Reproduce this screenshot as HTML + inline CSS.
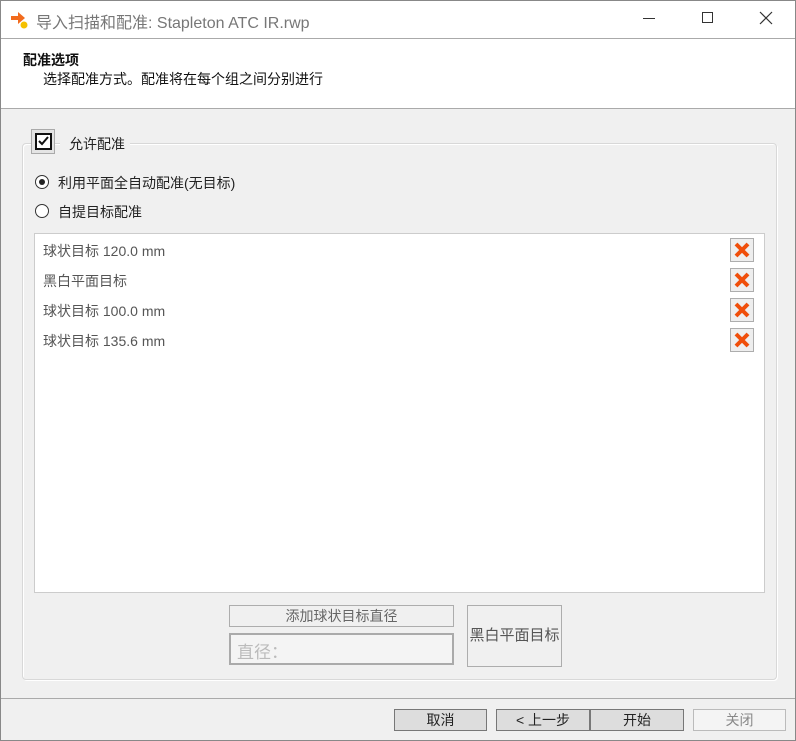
<!DOCTYPE html><html><head><meta charset="utf-8"><style>
*{box-sizing:border-box;margin:0;padding:0}
body{width:796px;height:741px;background:#f0f0f0;font-family:"Liberation Sans","Noto Sans CJK SC",sans-serif;font-size:14px;color:#222;position:relative;overflow:hidden}
.a{position:absolute}
.btn{position:absolute;border:1px solid #adadad;background:#e1e1e1;text-align:center;font-size:14px;line-height:20px}
.x{position:absolute;left:730px;width:24px;height:24px;border:1px solid #adadad;background:#eee}
</style></head><body>
<div class="a" style="left:0;top:0;width:796px;height:741px;border:1px solid #888"></div>
<div class="a" style="left:1px;top:1px;width:794px;height:37px;background:#fff"></div>
<svg class="a" style="left:10px;top:10px" width="20" height="20"><path d="M1 6h7V2l7 6-7 6v-4H1z" fill="#f26b1d"/><circle cx="14" cy="15" r="3.5" fill="#f5c000"/></svg>
<div class="a" style="left:36px;top:9px;font-size:16px;color:#777">导入扫描和配准: Stapleton ATC IR.rwp</div>
<div class="a" style="left:643px;top:18px;width:12px;height:1px;background:#333"></div>
<div class="a" style="left:702px;top:12px;width:11px;height:11px;border:1px solid #333"></div>
<svg class="a" style="left:759px;top:11px" width="14" height="14"><path d="M1 1L13 13M13 1L1 13" stroke="#333" stroke-width="1.2"/></svg>
<div class="a" style="left:1px;top:38px;width:794px;height:71px;background:#fff;border-top:1px solid #aaa;border-bottom:1px solid #aaa"></div>
<div class="a" style="left:23px;top:50px;font-weight:bold;font-size:14px;color:#111">配准选项</div>
<div class="a" style="left:43px;top:69px;color:#111">选择配准方式。配准将在每个组之间分别进行</div>
<div class="a" style="left:22px;top:143px;width:755px;height:537px;border:1px solid #d8d8d8;border-radius:4px;box-shadow:inset 1px 1px 0 #fff,1px 1px 0 #fff"></div>
<div class="a" style="left:60px;top:132px;width:70px;height:20px;background:#f0f0f0"></div>
<div class="a" style="left:31px;top:129px;width:24px;height:25px;border:1px solid #aaa;background:#e4e4e4"></div>
<div class="a" style="left:35px;top:133px;width:17px;height:17px;border:2px solid #111;background:#fff"></div>
<svg class="a" style="left:37px;top:135px" width="13" height="13"><path d="M2 6l3 3 6-7" stroke="#111" stroke-width="2" fill="none"/></svg>
<div class="a" style="left:69px;top:134px">允许配准</div>
<div class="a" style="left:35px;top:175px;width:14px;height:14px;border:1px solid #333;border-radius:50%;background:#fff"></div>
<div class="a" style="left:39px;top:179px;width:6px;height:6px;border-radius:50%;background:#222"></div>
<div class="a" style="left:58px;top:173px">利用平面全自动配准(无目标)</div>
<div class="a" style="left:35px;top:204px;width:14px;height:14px;border:1px solid #333;border-radius:50%;background:#fff"></div>
<div class="a" style="left:58px;top:202px">自提目标配准</div>
<div class="a" style="left:34px;top:233px;width:731px;height:360px;background:#fff;border:1px solid #ccc"></div>
<div class="a" style="left:43px;top:241px;color:#555">球状目标 120.0 mm</div>
<div class="a" style="left:43px;top:271px;color:#555">黑白平面目标</div>
<div class="a" style="left:43px;top:301px;color:#555">球状目标 100.0 mm</div>
<div class="a" style="left:43px;top:331px;color:#555">球状目标 135.6 mm</div>
<div class="x" style="top:238px"><svg width="22" height="22"><path d="M5 5L17 17M17 5L5 17" stroke="#f04e0a" stroke-width="4"/></svg></div>
<div class="x" style="top:268px"><svg width="22" height="22"><path d="M5 5L17 17M17 5L5 17" stroke="#f04e0a" stroke-width="4"/></svg></div>
<div class="x" style="top:298px"><svg width="22" height="22"><path d="M5 5L17 17M17 5L5 17" stroke="#f04e0a" stroke-width="4"/></svg></div>
<div class="x" style="top:328px"><svg width="22" height="22"><path d="M5 5L17 17M17 5L5 17" stroke="#f04e0a" stroke-width="4"/></svg></div>
<div class="btn" style="left:229px;top:605px;width:225px;height:22px;background:#f0f0f0;color:#666">添加球状目标直径</div>
<div class="a" style="left:229px;top:633px;width:225px;height:32px;border:2px solid #aaa;background:#f4f4f4;color:#bbb;font-size:17px;padding:3px 6px">直径：</div>
<div class="btn" style="left:467px;top:605px;width:95px;height:62px;background:#f0f0f0;color:#555;line-height:60px;font-size:15px;white-space:nowrap;overflow:hidden">黑白平面目标</div>
<div class="a" style="left:1px;top:698px;width:794px;height:1px;background:#aaa"></div>
<div class="btn" style="left:394px;top:709px;width:93px;height:22px;border-color:#777;background:#ddd">取消</div>
<div class="btn" style="left:496px;top:709px;width:94px;height:22px;border-color:#777;background:#ddd">&lt; 上一步</div>
<div class="btn" style="left:590px;top:709px;width:94px;height:22px;border-color:#777;background:#ddd">开始</div>
<div class="btn" style="left:693px;top:709px;width:93px;height:22px;border-color:#bbb;background:#f4f4f4;color:#888">关闭</div>
</body></html>
